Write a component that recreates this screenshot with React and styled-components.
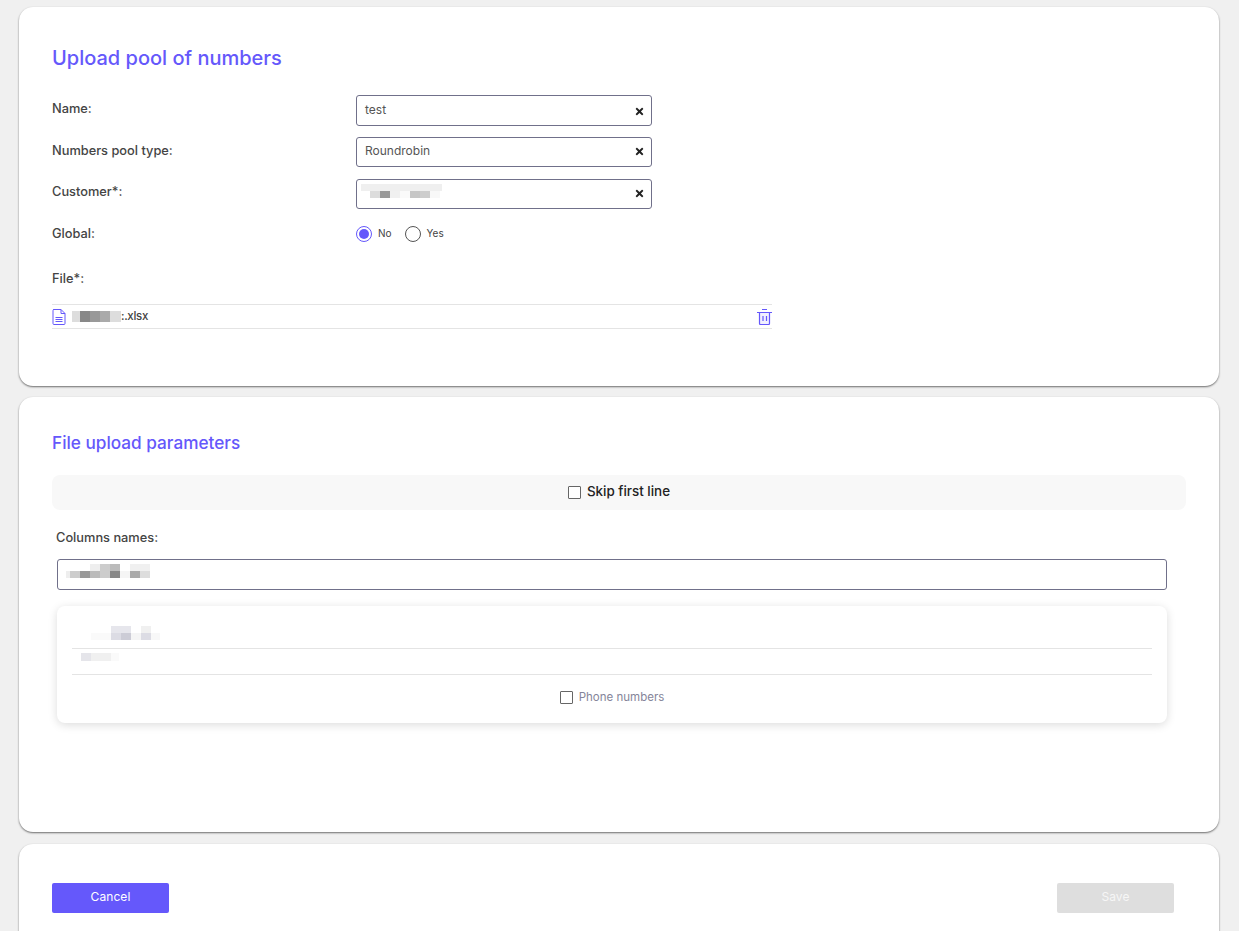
import React from 'react'
import styled, { createGlobalStyle } from 'styled-components'
import { FaTimes } from 'react-icons/fa'

const GlobalStyle = createGlobalStyle`
  html, body {
    margin: 0;
    height: 931px;
    overflow: hidden;
    background: #f0f0f0;
  }
  * { box-sizing: border-box; }
`

const Page = styled.div`
  padding: 7px 20px 0 19px;
  display: flex;
  flex-direction: column;
  font-family: Inter, "Liberation Sans", sans-serif;
  color: #3c3c3c;
`

const Card = styled.section`
  height: ${p => p.$height}px;
  margin-bottom: ${p => p.$gap || 0}px;
  padding: ${p => p.$top}px 33px 0;
  background: #fff;
  border-radius: 14px;
  box-shadow: 0 1px 2px rgba(0, 0, 0, 0.55);
`

const Title = styled.h1`
  margin: 0;
  font-size: ${p => p.$size}px;
  line-height: 24px;
  font-weight: 500;
  color: #6558fb;
`

const Form = styled.div`
  display: flex;
  flex-direction: column;
  margin-top: ${p => p.$top}px;
`

const Row = styled.div`
  display: flex;
  height: ${p => p.$height}px;
`

const Label = styled.label`
  width: 304px;
  font-size: 12.8px;
  line-height: 16px;
  font-weight: 500;
  padding-top: ${p => p.$pt ?? 6}px;
  color: #444;
`

const Field = styled.div`
  display: flex;
  align-items: flex-start;
  justify-content: space-between;
  width: 296px;
  height: ${p => p.$height || 30}px;
  padding: ${p => p.$pt ?? 6}px 6px 0 ${p => p.$pl ?? 8}px;
  border: 1px solid #70708a;
  border-radius: 3px;
  font-size: 12px;
  line-height: 16px;
  font-weight: 400;
  color: #555;
`

const Clear = styled(FaTimes)`
  width: 11px;
  height: 11px;
  margin-top: ${p => p.$mt ?? 3}px;
  color: #222;
  flex: none;
`

const Radios = styled.div`
  display: flex;
  align-items: center;
  height: 18px;
  margin-top: 4px;
`

const Radio = styled.span`
  width: 16px;
  height: 16px;
  border-radius: 50%;
  border: 1px solid ${p => (p.$on ? '#6558fb' : '#555')};
  display: flex;
  align-items: center;
  justify-content: center;
  &::after {
    content: '';
    display: ${p => (p.$on ? 'block' : 'none')};
    width: 10px;
    height: 10px;
    border-radius: 50%;
    background: #6558fb;
  }
`

const RadioText = styled.span`
  font-size: 10px;
  line-height: 14px;
  color: #444;
  margin: -2px 13px 0 6px;
`

const FileRow = styled.div`
  display: flex;
  align-items: center;
  justify-content: space-between;
  width: 720px;
  height: 25px;
  margin-top: 13px;
  border-top: 1px solid #e4e4e4;
  border-bottom: 1px solid #e4e4e4;
`

const FileName = styled.div`
  display: flex;
  align-items: center;
  gap: 6px;
  font-size: 11.5px;
  letter-spacing: -0.3px;
  font-weight: 500;
  color: #444;
`

const Stem = styled.div`
  display: flex;
  align-items: center;
  margin-bottom: 1px;
`

const SkipBar = styled.div`
  display: flex;
  align-items: center;
  justify-content: center;
  gap: 6px;
  height: 35px;
  margin-top: 20px;
  padding-bottom: 3px;
  background: #f8f8f8;
  border-radius: 8px;
  font-size: 13.4px;
  font-weight: 500;
  color: #222;
`

const Box = styled.span`
  width: 13px;
  height: 13px;
  margin-top: ${p => p.$mt || 0}px;
  border: 1px solid #666;
  border-radius: 1px;
  background: #fff;
  flex: none;
`

const Columns = styled.div`
  padding: 0 19px 0 4px;
`

const ColumnsLabel = styled.div`
  margin: 20px 0 13px;
  font-size: 12.8px;
  line-height: 16px;
  font-weight: 500;
  color: #444;
`

const ColumnsInput = styled.div`
  height: 31px;
  margin-left: 1px;
  padding: 4px 0 0 8px;
  border: 1px solid #70708a;
  border-radius: 3px;
`

const ListCard = styled.div`
  height: 117px;
  margin: 16px 0 0 1px;
  padding: 20px 15px 0;
  border-radius: 8px;
  box-shadow: 0 2px 10px rgba(0, 0, 0, 0.14);
`

const ListRow = styled.div`
  height: ${p => p.$height}px;
  padding: ${p => p.$pt || 0}px 0 0 ${p => p.$pl}px;
  border-bottom: 1px solid #e4e4e4;
`

const PhoneRow = styled.div`
  display: flex;
  align-items: center;
  justify-content: center;
  gap: 6px;
  height: 44px;
  font-size: 11.5px;
  color: #85859a;
`

const Actions = styled.div`
  display: flex;
  justify-content: space-between;
  padding-right: 12px;
`

const Button = styled.button`
  width: 117px;
  height: 30px;
  padding: 0 0 4px;
  border: 0;
  border-radius: 2px;
  background: ${p => (p.$disabled ? '#dedede' : '#6558fb')};
  color: ${p => (p.$disabled ? '#f6f6f6' : '#fff')};
  font-family: inherit;
  font-size: 12px;
  letter-spacing: 0.1px;
`

// blurred-out pieces of the screenshot: [x, y, width, height, colour]
const Blur = ({ w, h, cells }) => (
  <svg width={w} height={h} style={{ display: 'block', flex: 'none' }}>
    {cells.map(([x, y, cw, ch, fill], i) => (
      <rect key={i} x={x} y={y} width={cw} height={ch} fill={fill} />
    ))}
  </svg>
)

const customerCells = [
  [0, 0, 81, 7, '#efefef'],
  [9, 7, 10, 7, '#dcdcdc'],
  [19, 7, 10, 7, '#999'],
  [29, 7, 10, 7, '#f0f0f0'],
  [39, 7, 10, 7, '#fafafa'],
  [49, 7, 10, 7, '#c6c6c6'],
  [59, 7, 10, 7, '#cdcdcd'],
  [69, 7, 10, 7, '#f8f8f8'],
]

const fileCells = [
  [0, 0, 8, 11, '#ddd'],
  [8, 0, 10, 11, '#888'],
  [18, 0, 10, 11, '#999'],
  [28, 0, 10, 11, '#aaa'],
  [38, 0, 11, 11, '#ddd'],
]

const columnCells = [
  [24, 0, 10, 7, '#eee'],
  [34, 0, 10, 7, '#ccc'],
  [44, 0, 10, 7, '#bbb'],
  [64, 0, 20, 7, '#f0f0f0'],
  [0, 7, 4, 7, '#eee'],
  [4, 7, 10, 7, '#ccc'],
  [14, 7, 10, 7, '#999'],
  [24, 7, 10, 7, '#bbb'],
  [34, 7, 10, 7, '#ccc'],
  [44, 7, 10, 7, '#888'],
  [54, 7, 10, 7, '#f5f5f5'],
  [64, 7, 10, 7, '#aaa'],
  [74, 7, 10, 7, '#ddd'],
]

const listHeadCells = [
  [20, 0, 20, 7, '#e6e6ec'],
  [50, 0, 10, 7, '#f0f0f0'],
  [0, 7, 20, 7, '#fafafa'],
  [20, 7, 10, 7, '#dcdce4'],
  [30, 7, 10, 7, '#ccccd6'],
  [40, 7, 10, 7, '#f5f5f5'],
  [50, 7, 10, 7, '#dcdce4'],
  [60, 7, 9, 7, '#f8f8f8'],
]

const listRowCells = [
  [0, 0, 10, 8, '#e5e5ea'],
  [10, 0, 20, 8, '#f0f0f0'],
  [30, 0, 8, 8, '#fafafa'],
]

const FileIcon = () => (
  <svg width="14" height="16" viewBox="0 0 14 16" fill="none" stroke="#6558fb" strokeWidth="1">
    <path d="M1.5 .5h7.5l4 4v10a1 1 0 0 1-1 1h-10a1 1 0 0 1-1-1v-13a1 1 0 0 1 1-1z" />
    <path d="M9 .5v4h4M3.5 8.5h7M3.5 10.5h7M3.5 12.5h7" />
  </svg>
)

const TrashIcon = () => (
  <svg width="15" height="16" viewBox="0 0 15 16" fill="none" stroke="#6558fb" strokeWidth="1">
    <path d="M2.5 3.5v11a1 1 0 0 0 1 1h8a1 1 0 0 0 1-1v-11z" fill="#f1f0ff" strokeWidth="1.2" />
    <path d="M0 3.5h15M5 .5h5M6 7v5M9.5 7v5" strokeWidth="1.2" />
  </svg>
)

const App = () => {
  return (
    <Page>
      <GlobalStyle />
      <Card $height={379} $gap={11} $top={39}>
        <Title $size={20}>Upload pool of numbers</Title>
        <Form $top={25}>
          <Row $height={42}>
            <Label>Name:</Label>
            <Field $height={31}>
              test
              <Clear $mt={4} />
            </Field>
          </Row>
          <Row $height={42}>
            <Label>Numbers pool type:</Label>
            <Field $pt={5}>
              Roundrobin
              <Clear />
            </Field>
          </Row>
          <Row $height={42}>
            <Label $pt={5}>Customer*:</Label>
            <Field $pl={4} $pt={4}>
              <Blur w={81} h={14} cells={customerCells} />
              <Clear $mt={4} />
            </Field>
          </Row>
          <Row $height={44}>
            <Label $pt={5}>Global:</Label>
            <Radios>
              <Radio $on />
              <RadioText>No</RadioText>
              <Radio />
              <RadioText>Yes</RadioText>
            </Radios>
          </Row>
          <Row $height={26}>
            <Label>File*:</Label>
          </Row>
          <FileRow>
            <FileName>
              <FileIcon />
              <Stem>
                <Blur w={49} h={11} cells={fileCells} />
                :.xlsx
              </Stem>
            </FileName>
            <TrashIcon />
          </FileRow>
        </Form>
      </Card>

      <Card $height={435} $gap={12} $top={34}>
        <Title $size={17.2}>File upload parameters</Title>
        <SkipBar>
          <Box $mt={2} />
          Skip first line
        </SkipBar>
        <Columns>
          <ColumnsLabel>Columns names:</ColumnsLabel>
          <ColumnsInput>
            <Blur w={84} h={14} cells={columnCells} />
          </ColumnsInput>
          <ListCard>
            <ListRow $height={23} $pl={19}>
              <Blur w={69} h={14} cells={listHeadCells} />
            </ListRow>
            <ListRow $height={26} $pl={9} $pt={4}>
              <Blur w={38} h={8} cells={listRowCells} />
            </ListRow>
            <PhoneRow>
              <Box />
              Phone numbers
            </PhoneRow>
          </ListCard>
        </Columns>
      </Card>

      <Card $height={110} $top={39}>
        <Actions>
          <Button>Cancel</Button>
          <Button $disabled>Save</Button>
        </Actions>
      </Card>
    </Page>
  )
}

export default App
